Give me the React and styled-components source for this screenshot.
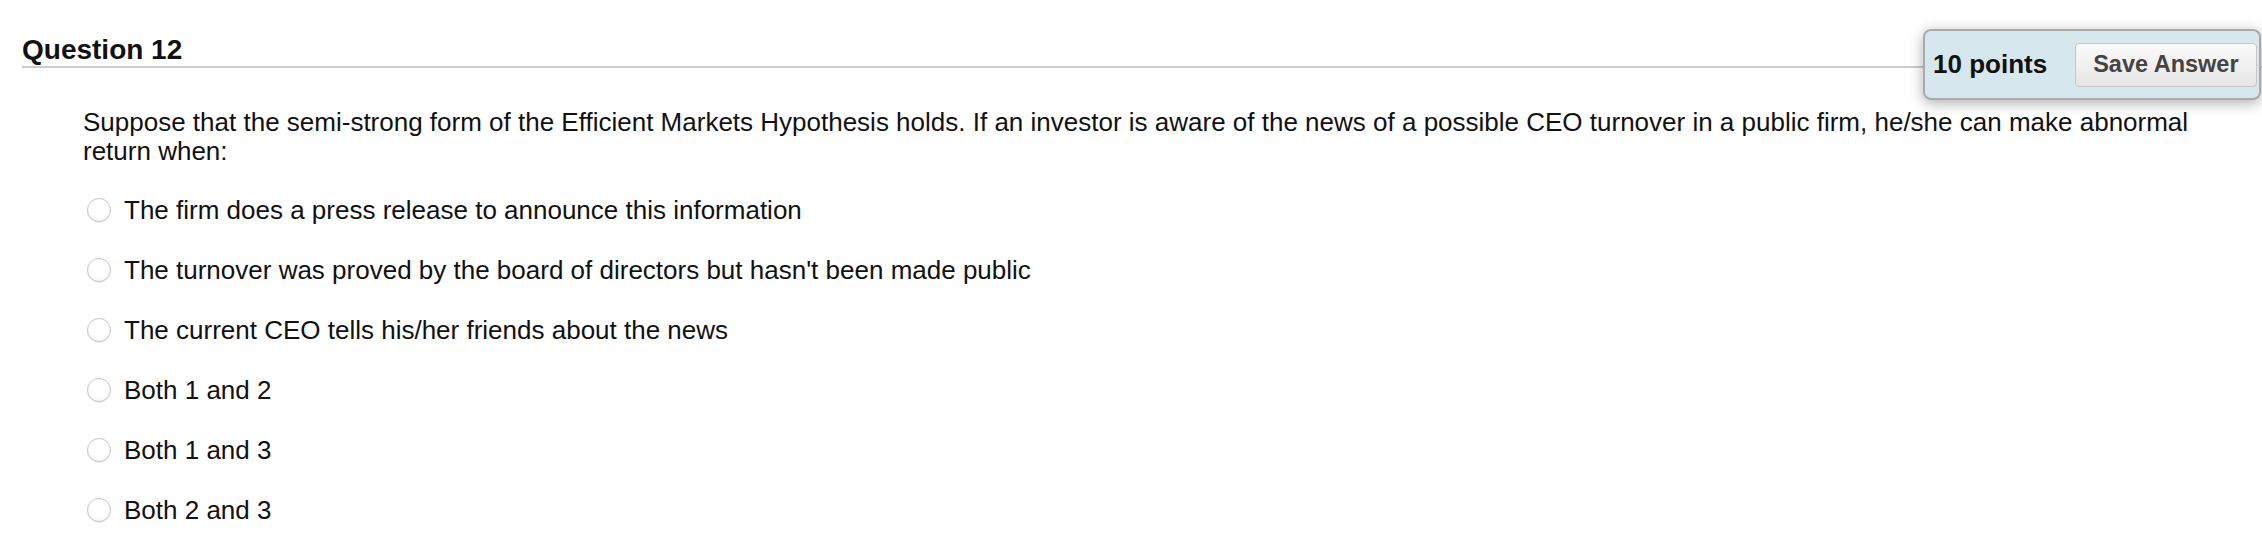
import React from "react";
import styled, { createGlobalStyle } from "styled-components";

const Global = createGlobalStyle`
  html, body { margin: 0; padding: 0; background: #ffffff; }
  body {
    font-family: "Liberation Sans", Arial, Helvetica, sans-serif;
    color: #111111;
  }
`;

const Page = styled.div`
  position: relative;
  width: 2262px;
  height: 560px;
  overflow: hidden;
`;

const Header = styled.div`
  margin-left: 22px;
  padding-top: 33px;
  border-bottom: 2px solid #cccccc;
`;

const Title = styled.h2`
  margin: 0;
  font-size: 28px;
  line-height: 33px;
  font-weight: bold;
  color: #111111;
`;

const PointsBox = styled.div`
  position: absolute;
  top: 29px;
  left: 1923px;
  width: 338px;
  height: 71px;
  box-sizing: border-box;
  display: flex;
  align-items: center;
  padding: 0 4px 0 8px;
  background: #d6e8ee;
  border: 2px solid #aaaaaa;
  border-radius: 8px;
  box-shadow: 0 3px 14px rgba(0, 0, 0, 0.32);
`;

const Points = styled.span`
  font-size: 26px;
  font-weight: bold;
  color: #111111;
  margin-right: 28px;
  white-space: nowrap;
`;

const SaveButton = styled.button`
  height: 44px;
  padding: 0 17px;
  box-sizing: border-box;
  font-family: "Liberation Sans", Arial, Helvetica, sans-serif;
  font-size: 23.5px;
  font-weight: bold;
  color: #444444;
  white-space: nowrap;
  background: linear-gradient(#fbfbfb, #e6e6e6);
  border: 1px solid #c6c6c6;
  border-radius: 4px;
  cursor: pointer;
`;

const Body = styled.div`
  padding: 40px 40px 0 83px;
`;

const Prompt = styled.p`
  margin: 0;
  font-size: 26px;
  line-height: 29px;
  color: #111111;
`;

const Options = styled.ul`
  list-style: none;
  margin: 30px 0 0 4px;
  padding: 0;
  display: flex;
  flex-direction: column;
  gap: 32px;
`;

const Option = styled.li`
  display: flex;
  align-items: center;
  gap: 13px;
  height: 28px;
  font-size: 26px;
  line-height: 28px;
  color: #111111;
`;

const Radio = styled.span`
  width: 24px;
  height: 24px;
  box-sizing: border-box;
  border-radius: 50%;
  border: 1px solid #c4c4c4;
  background: radial-gradient(circle at 50% 35%, #ffffff 55%, #f0f0f0 100%);
  box-shadow: 0 1px 1px rgba(0, 0, 0, 0.08);
  flex: none;
`;

const options = [
  "The firm does a press release to announce this information",
  "The turnover was proved by the board of directors but hasn't been made public",
  "The current CEO tells his/her friends about the news",
  "Both 1 and 2",
  "Both 1 and 3",
  "Both 2 and 3",
];

export default function App() {
  return (
    <Page>
      <Global />
      <Header>
        <Title>Question 12</Title>
      </Header>
      <PointsBox>
        <Points>10 points</Points>
        <SaveButton type="button">Save Answer</SaveButton>
      </PointsBox>
      <Body>
        <Prompt>
          Suppose that the semi-strong form of the Efficient Markets Hypothesis holds. If an
          investor is aware of the news of a possible CEO turnover in a public firm, he/she can
          make abnormal return when:
        </Prompt>
        <Options>
          {options.map((o) => (
            <Option key={o}>
              <Radio />
              <span>{o}</span>
            </Option>
          ))}
        </Options>
      </Body>
    </Page>
  );
}
